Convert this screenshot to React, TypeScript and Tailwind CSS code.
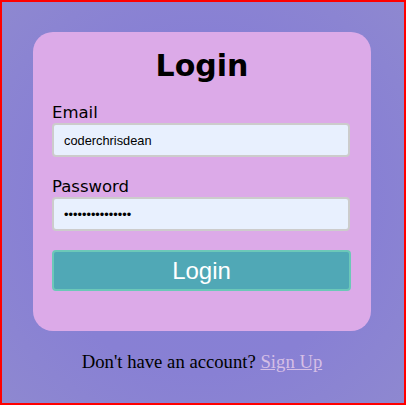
export default function App() {
  return (
    <div className="flex h-[405px] w-[406px] flex-col items-center border-2 border-[#ff0000] bg-[radial-gradient(circle_at_center,#8580d6_0%,#8880d4_60%,#8e88d0_100%)]">
      <div className="mr-[2px] mt-[30px] w-[338px] rounded-[20px] bg-[#dcaae8] px-[19px] pb-[40px] pt-[16px]">
        <h1 className="text-center font-['DejaVu_Sans',sans-serif] text-[30px] font-bold leading-[36px] text-black">
          Login
        </h1>
        <form className="mt-[19px] flex flex-col" onSubmit={(e) => e.preventDefault()}>
          <label className="font-['DejaVu_Sans',sans-serif] text-[16.5px] leading-[20px] text-black">
            Email
          </label>
          <input
            className="h-[34px] w-[298px] rounded-[4px] border-2 border-[#cccccc] bg-[#e8f0fe] px-[10px] font-['Liberation_Sans',sans-serif] text-[12.8px] text-black outline-none"
            defaultValue="coderchrisdean"
            type="text"
          />
          <label className="mt-[20px] font-['DejaVu_Sans',sans-serif] text-[16.5px] leading-[20px] text-black">
            Password
          </label>
          <input
            className="h-[34px] w-[298px] rounded-[4px] border-2 border-[#cccccc] bg-[#e8f0fe] px-[10px] font-['Liberation_Sans',sans-serif] text-[12.8px] text-black outline-none"
            defaultValue="coderchrisdean1"
            type="password"
          />
          <button
            className="mt-[19px] h-[41px] w-[299px] rounded-[4px] border-2 border-[#6cc8b8] bg-[#50a8b6] font-['Liberation_Sans',sans-serif] text-[24px] text-white"
            type="submit"
          >
            Login
          </button>
        </form>
      </div>
      <p className="mr-[2px] mt-[20px] font-['Liberation_Serif',serif] text-[18.7px] leading-[22px] text-black">
        Don't have an account?{" "}
        <a className="text-[#d6bfe6] underline" href="#">
          Sign Up
        </a>
      </p>
    </div>
  );
}
